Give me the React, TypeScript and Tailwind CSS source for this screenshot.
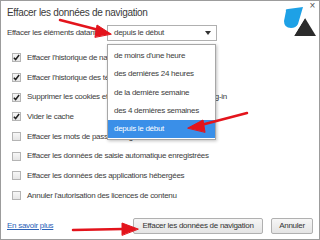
import React from 'react';

const font = { fontFamily: '"Liberation Sans", Arial, sans-serif' };

const options = [
  { label: "Effacer l'historique de navigation", checked: true },
  { label: "Effacer l'historique des téléchargements", checked: true },
  { label: 'Supprimer les cookies et autres données de site et de plug-in', checked: true },
  { label: 'Vider le cache', checked: true },
  { label: 'Effacer les mots de passe enregistrés', checked: false },
  { label: 'Effacer les données de saisie automatique enregistrées', checked: false },
  { label: 'Effacer les données des applications hébergées', checked: false },
  { label: "Annuler l'autorisation des licences de contenu", checked: false },
];

const periods = [
  "de moins d'une heure",
  'des dernières 24 heures',
  'de la dernière semaine',
  'des 4 dernières semaines',
  'depuis le début',
];

function Checkbox({ checked }: { checked: boolean }) {
  return (
    <span className="w-[9px] h-[9px] shrink-0 border border-[#b4b4b4] bg-gradient-to-b from-[#f7f7f7] to-[#e6e6e6] flex items-center justify-center">
      {checked && (
        <svg width="7" height="7" viewBox="0 0 8 8">
          <path d="M1 4.2 L3 6.3 L7 1.2" stroke="#222" strokeWidth="1.7" fill="none" />
        </svg>
      )}
    </span>
  );
}

function Logo() {
  return (
    <svg width="36" height="32" viewBox="0 0 36 32" className="absolute left-[280px] top-[4px]">
      <path d="M5 6 Q4 4 7 4 L22 2 L17 19 Q15 23 10 23 Q3 23 3 16 Z" fill="#1ea1e6" />
      <path d="M24 13 L35 31 L13 31 Z" fill="#2b2b2b" />
      <path d="M24 13 L13 31 L11 31 L23 11 Z" fill="#ffffff" />
    </svg>
  );
}

function Arrows() {
  return (
    <svg width="320" height="240" viewBox="0 0 320 240" className="absolute left-0 top-0 pointer-events-none">
      <g fill="#e3141c" stroke="#e3141c" strokeLinecap="round">
        <line x1="59" y1="19" x2="98" y2="29" strokeWidth="2.5" />
        <path d="M110 33 L96 24 L94 36 Z" />
        <line x1="246" y1="112" x2="200" y2="124" strokeWidth="2.5" />
        <path d="M187 127 L202 119 L204 131 Z" />
        <line x1="72" y1="229" x2="122" y2="228" strokeWidth="2.5" />
        <path d="M137 228 L121 222 L121 234 Z" />
      </g>
    </svg>
  );
}

export default function App() {
  return (
    <div
      className="relative w-[320px] h-[240px] bg-white border border-[#9c9c9c] overflow-hidden flex flex-col text-[#3d3d3d] text-[8px] tracking-[-0.28px]"
      style={font}
    >
      <div className="h-[22px] pl-[6px] pt-[4px] text-[10px] tracking-[-0.3px] text-[#3a3a3a] whitespace-nowrap">
        Effacer les données de navigation
      </div>
      <span className="absolute right-[4px] top-[0px] text-[10px] leading-none text-[#555]">×</span>
      <Logo />

      <div className="h-[20px] pl-[6px] flex items-center">
        <span className="w-[100px] whitespace-nowrap">Effacer les éléments datant de</span>
        <div className="w-[110px] h-[16px] border border-[#b0b0b0] bg-white flex items-center justify-between pl-[6px] pr-[5px]">
          <span>depuis le début</span>
          <svg width="6" height="4" viewBox="0 0 6 4">
            <path d="M0 0 L6 0 L3 4 Z" fill="#333" />
          </svg>
        </div>
      </div>

      <div className="flex flex-col pl-[11px] pt-[5px]">
        {options.map((o) => (
          <div key={o.label} className="h-[19.7px] flex items-center gap-[6px]">
            <Checkbox checked={o.checked} />
            <span className="whitespace-nowrap">{o.label}</span>
          </div>
        ))}
      </div>

      <div className="mt-auto h-[22px] mb-[2px] pl-[6px] pr-[6px] flex items-center">
        <a className="text-[#2b62b8] underline">En savoir plus</a>
        <div className="ml-auto flex gap-[8px]">
          <button className="w-[130px] h-[16px] border border-[#b0b0b0] rounded-[2px] bg-gradient-to-b from-[#f6f6f6] to-[#e4e4e4] text-[#333] whitespace-nowrap">
            Effacer les données de navigation
          </button>
          <button className="w-[42px] h-[16px] border border-[#b0b0b0] rounded-[2px] bg-gradient-to-b from-[#f6f6f6] to-[#e4e4e4] text-[#333]">
            Annuler
          </button>
        </div>
      </div>

      <div className="absolute left-[106px] top-[43px] w-[109px] border border-[#a7a7a7] bg-white shadow-[1px_1px_3px_rgba(0,0,0,0.25)] pt-[2px] pb-[1px]">
        {periods.map((p, i) => (
          <div
            key={p}
            className={`h-[18.3px] flex items-center pl-[6px] whitespace-nowrap ${
              i === periods.length - 1 ? 'bg-[#3a8fe8] text-white' : 'text-[#3d3d3d]'
            }`}
          >
            {p}
          </div>
        ))}
      </div>

      <Arrows />
    </div>
  );
}
